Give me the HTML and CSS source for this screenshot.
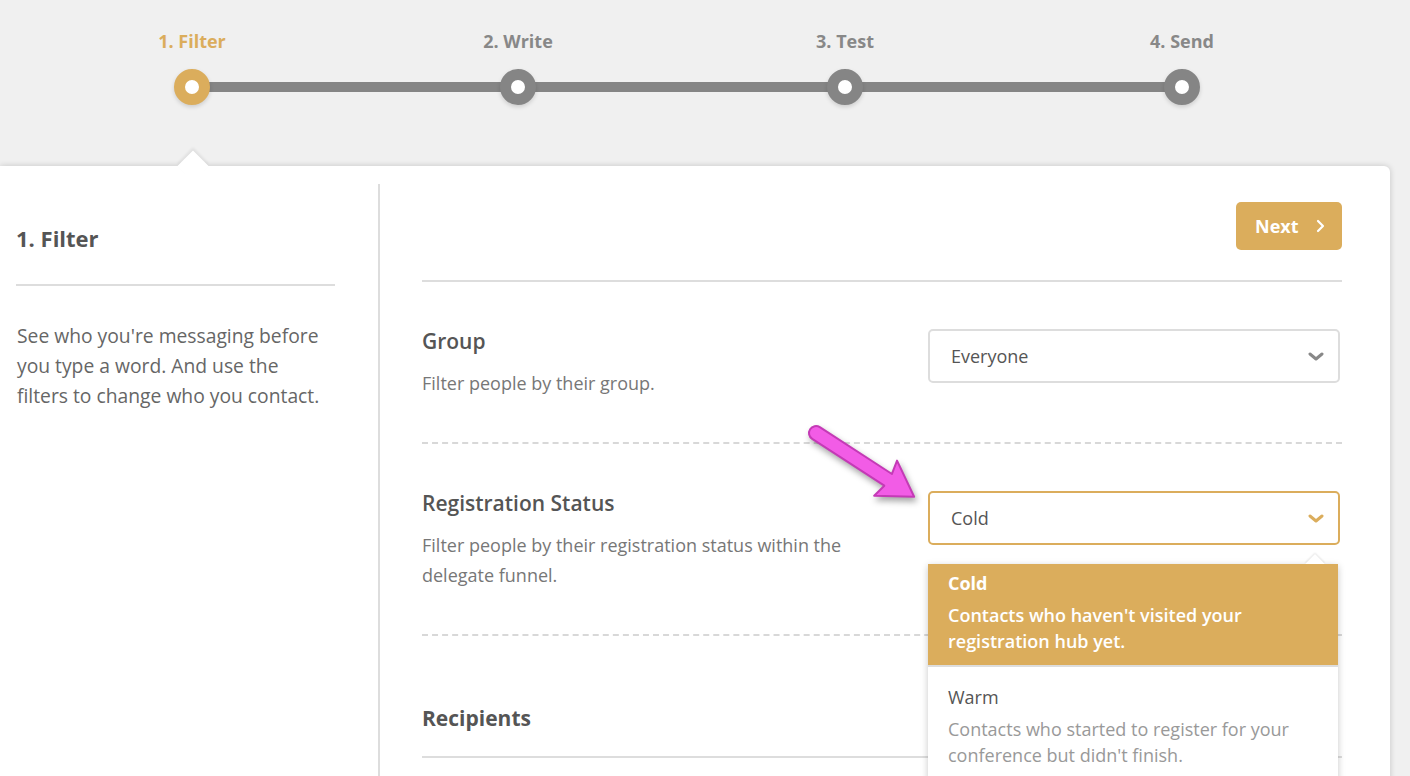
FILE: index.html
```html
<!DOCTYPE html>
<html lang="en">
<head>
  <meta charset="UTF-8">
  <title>Message Wizard - Filter</title>
  <link rel="stylesheet" href="styles.css">
</head>
<body>
  <div class="steps">
    <div class="step active"><span class="step-label">1. Filter</span><span class="dot"></span></div>
    <div class="connector c1"></div>
    <div class="step"><span class="step-label">2. Write</span><span class="dot"></span></div>
    <div class="connector c2"></div>
    <div class="step"><span class="step-label">3. Test</span><span class="dot"></span></div>
    <div class="connector c3"></div>
    <div class="step"><span class="step-label">4. Send</span><span class="dot"></span></div>
  </div>

  <div class="card">
    <aside class="intro">
      <h2>1. Filter</h2>
      <p>See who you're messaging before you type a word. And use the filters to change who you contact.</p>
    </aside>

    <main class="filters">
      <div class="toolbar">
        <button class="btn-next">Next
          <svg width="9" height="14" viewBox="0 0 9 14"><path d="M2 2l5 5-5 5" fill="none" stroke="#fff" stroke-width="2.2" stroke-linecap="round" stroke-linejoin="round"/></svg>
        </button>
      </div>

      <section class="filter-row">
        <div class="filter-text">
          <h3>Group</h3>
          <p>Filter people by their group.</p>
        </div>
        <div class="select">
          <span>Everyone</span>
          <svg class="chev" width="16" height="10" viewBox="0 0 16 10"><path d="M2 2l6 5 6-5" fill="none" stroke="#888" stroke-width="3" stroke-linecap="round" stroke-linejoin="round"/></svg>
        </div>
      </section>

      <section class="filter-row">
        <div class="filter-text">
          <h3>Registration Status</h3>
          <p>Filter people by their registration status within the delegate funnel.</p>
        </div>
        <div class="select open">
          <span>Cold</span>
          <svg class="chev" width="16" height="10" viewBox="0 0 16 10"><path d="M2 2l6 5 6-5" fill="none" stroke="#dbad5c" stroke-width="3" stroke-linecap="round" stroke-linejoin="round"/></svg>
          <ul class="menu">
            <li class="selected">
              <strong>Cold</strong>
              <span>Contacts who haven't visited your registration hub yet.</span>
            </li>
            <li>
              <strong>Warm</strong>
              <span>Contacts who started to register for your conference but didn't finish.</span>
            </li>
          </ul>
        </div>
      </section>

      <section class="recipients">
        <h3>Recipients</h3>
      </section>
    </main>

    <svg class="pointer" width="140" height="110" viewBox="0 0 140 110">
      <g transform="translate(14 12) rotate(33)">
        <path d="M0 -7 L86 -7 L83 -21 L117 0 L83 21 L86 7 L0 7 A7 7 0 0 1 0 -7 Z" fill="#f25ce6" stroke="#c43ab6" stroke-width="2" stroke-linejoin="round"/>
      </g>
    </svg>
  </div>
</body>
</html>
```

FILE: styles.css
```css
* { box-sizing: border-box; }
body { margin: 0; background: #f0f0f0; font-family: "Open Sans", "Liberation Sans", sans-serif; color: #555; overflow: hidden; }

/* stepper */
.steps { display: flex; align-items: flex-end; padding: 29px 0 0 174px; height: 105px; }
.step { width: 36px; display: flex; flex-direction: column; align-items: center; gap: 16px; }
.step-label { white-space: nowrap; font-size: 18px; line-height: 24px; font-weight: 700; color: #888; }
.dot { width: 36px; height: 36px; border-radius: 50%; background: #fff; border: 11px solid #858585; box-shadow: 0 2px 4px rgba(0,0,0,0.15); position: relative; z-index: 1; }
.step.active .step-label { color: #dbad5c; }
.step.active .dot { border-color: #dbad5c; }
.connector { height: 10px; background: #858585; margin: 0 -2px 13px; }
.c1 { width: 294px; }
.c2 { width: 295px; }
.c3 { width: 305px; }

/* card */
.card { position: relative; width: 1390px; height: 700px; margin-top: 61px; background: #fff; border-radius: 0 6px 0 0; box-shadow: 0 0 6px rgba(0,0,0,0.18); display: flex; align-items: flex-start; }
.card::before { content: ""; position: absolute; left: 182px; top: -11px; width: 22px; height: 22px; background: #fff; transform: rotate(45deg); box-shadow: -2px -2px 3px rgba(0,0,0,0.07); }

.intro { width: 380px; margin-top: 18px; min-height: 700px; padding: 40px 43px 0 16px; border-right: 2px solid #ddd; position: relative; }
.intro h2 { margin: 0; font-size: 22px; line-height: 28px; font-weight: 700; color: #555; padding-bottom: 32px; border-bottom: 2px solid #ddd; }
.intro p { max-width: 310px; margin: 35px 0 0 1px; font-size: 19.3px; line-height: 30px; color: #666; }

.filters { flex: 1; padding: 36px 48px 0 42px; }
.toolbar { display: flex; justify-content: flex-end; padding-bottom: 30px; border-bottom: 2px solid #ddd; }
.btn-next { height: 48px; width: 106px; display: flex; align-items: center; gap: 17px; padding: 0 0 0 19px; border: none; border-radius: 5px; background: #dbad5c; color: #fff; font-family: inherit; font-size: 18px; font-weight: 700; }

.filter-row { display: flex; justify-content: space-between; align-items: flex-start; padding: 45px 2px 44px 0; border-bottom: 2px dashed #d8d8d8; }
.filter-text { width: 460px; }
h3 { margin: 0; font-size: 21px; line-height: 28px; font-weight: 600; color: #555; }
.filter-text p { margin: 13px 0 0; font-size: 18px; line-height: 30px; color: #777; }

.select { position: relative; width: 412px; height: 54px; margin-top: 2px; border: 2px solid #ddd; border-radius: 5px; display: flex; align-items: center; justify-content: space-between; padding: 0 14px 0 21px; font-size: 18px; color: #555; }
.select.open { border-color: #dbad5c; }
.chev { margin-top: 2px; }

.menu { position: absolute; top: 71px; left: -2px; width: 410px; margin: 0; padding: 0; list-style: none; background: #fff; box-shadow: 0 2px 7px rgba(0,0,0,0.22); z-index: 2; }
.menu::before { content: ""; position: absolute; right: 16px; top: -7px; width: 14px; height: 14px; background: #fff; transform: rotate(45deg); box-shadow: -1px -1px 2px rgba(0,0,0,0.1); }
.menu li { position: relative; padding: 18px 20px 11px; border-bottom: 2px solid #ddd; }
.menu li strong { display: block; font-size: 18px; line-height: 24px; font-weight: 400; color: #555; }
.menu li span { display: block; margin-top: 7px; font-size: 18px; line-height: 26px; color: #999; }
.menu li.selected { background: #dbad5c; padding-top: 7px; }
.menu li.selected strong { color: #fff; font-weight: 700; }
.menu li.selected span { color: #fff; font-weight: 600; }

.recipients { padding: 68px 0 24px; border-bottom: 2px solid #ddd; }
.recipients h3 { font-weight: 700; }

.pointer { position: absolute; left: 802px; top: 255px; filter: drop-shadow(2px 4px 3px rgba(0,0,0,0.35)); z-index: 3; }
```
